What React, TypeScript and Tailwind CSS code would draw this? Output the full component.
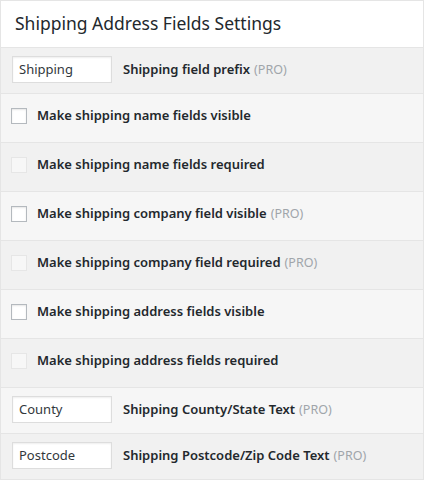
const rows: Array<
  | { kind: 'input'; value: string; label: string; pro?: boolean }
  | { kind: 'check'; label: string; pro?: boolean; disabled?: boolean }
> = [
  { kind: 'input', value: 'Shipping', label: 'Shipping field prefix', pro: true },
  { kind: 'check', label: 'Make shipping name fields visible' },
  { kind: 'check', label: 'Make shipping name fields required', disabled: true },
  { kind: 'check', label: 'Make shipping company field visible', pro: true },
  { kind: 'check', label: 'Make shipping company field required', pro: true, disabled: true },
  { kind: 'check', label: 'Make shipping address fields visible' },
  { kind: 'check', label: 'Make shipping address fields required', disabled: true },
  { kind: 'input', value: 'County', label: 'Shipping County/State Text', pro: true },
  { kind: 'input', value: 'Postcode', label: 'Shipping Postcode/Zip Code Text', pro: true },
]

function Pro() {
  return <span className="ml-1 text-[12.5px] font-normal text-[#a0a5aa]">(PRO)</span>
}

export default function App() {
  return (
    <div
      className="h-[480px] w-[424px] bg-white"
      style={{ fontFamily: "'Noto Sans', 'Open Sans', sans-serif" }}
    >
      <div className="border-x border-t border-[#e5e5e5] text-[#23282d]">
        <div className="flex h-[47px] items-center border-b border-[#e5e5e5] px-[14px]">
          <h2 className="text-[17.5px] font-normal leading-none">Shipping Address Fields Settings</h2>
        </div>
        {rows.map((row, i) => (
          <div
            key={i}
            className={`flex items-center border-b border-[#e5e5e5] ${
              i % 2 === 0 ? 'bg-[#f1f1f1]' : 'bg-[#f6f6f6]'
            } ${row.kind === 'input' ? 'h-[46px] pb-[2px]' : 'h-[49px] pb-[4px]'}`}
          >
            {row.kind === 'input' ? (
              <>
                <div className="ml-[11px] flex h-[27px] w-[100px] items-center border border-[#dddddd] bg-white px-[6px] text-[13px] text-[#32373c] shadow-[inset_0_1px_2px_rgba(0,0,0,0.07)]">
                  {row.value}
                </div>
                <div className="ml-[11px] text-[13px] font-semibold">
                  {row.label}
                  {row.pro && <Pro />}
                </div>
              </>
            ) : (
              <>
                <div
                  className={`ml-[10px] h-[16px] w-[16px] border ${
                    row.disabled
                      ? 'border-[#e6e6e6] bg-[#f7f7f7]'
                      : 'border-[#b4b9be] bg-white shadow-[inset_0_1px_2px_rgba(0,0,0,0.1)]'
                  }`}
                />
                <div className="ml-[10px] text-[13px] font-semibold">
                  {row.label}
                  {row.pro && <Pro />}
                </div>
              </>
            )}
          </div>
        ))}
      </div>
    </div>
  )
}
